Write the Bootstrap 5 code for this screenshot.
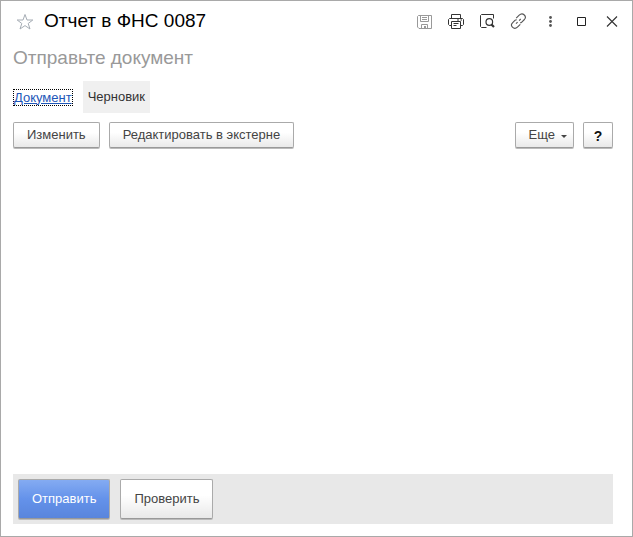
<!DOCTYPE html>
<html lang="ru">
<head>
<meta charset="utf-8">
<meta name="viewport" content="width=device-width, initial-scale=1">
<title>Отчет в ФНС 0087</title>
<link href="https://cdn.jsdelivr.net/npm/bootstrap@5.3.0/dist/css/bootstrap.min.css" rel="stylesheet">
<style>
body { font-family: "Liberation Sans", Arial, sans-serif; font-size: 13px; line-height: 16px; color: #333; background: #fff; }
.window-frame { border: 1px solid #a9a9a9; }
.window-head { height: 41px; padding: 0 4px 0 15px; }
.window-title { font-size: 19px; line-height: 24px; padding-bottom: 2px; color: #000; }
.subtitle { font-size: 19px; line-height: 24px; color: #999; }
.icon-btn { width: 31px; height: 31px; color: #333; }
.icon-btn svg, .star-btn svg { display: block; }
.icon-btn svg { margin: 0 7px; }
.star-btn { margin-right: 10px; }
.window-tools { margin-right: 1px; }
.window-body { padding: 4px 19px 12px 12px; }
.tabs { height: 32px; gap: 10px; margin-top: 11px; }
.doc-link { color: #1d56b8; line-height: 15px; border: 1px dotted #000; }
.tab-current { background: #f0f0f0; padding: 8px 5px; }
.commands { margin-top: 9px; gap: 9px; }
.btn-form { font-size: 13px; line-height: 16px; color: #444; padding: 4px 13px; border: 1px solid #aaa; border-bottom-color: #999; border-radius: 2px; background: linear-gradient(#fff 40%, #e9e9e9); box-shadow: 0 1px 0 #bbb; }
.btn-form:hover { color: #222; border-color: #999; }
.btn-more::after { content: ""; display: inline-block; margin-left: 6px; vertical-align: 1px; border: 3px solid transparent; border-top-color: #444; border-bottom: 0; }
.btn-more { padding-right: 6px; }
.btn-help { width: 30px; font-size: 14px; font-weight: 700; color: #111; padding: 5px 0 3px; }
.footer-bar { background: #e8e8e8; padding: 5px; gap: 10px; }
.footer-bar .btn-form { padding: 11px 13px; }
.footer-bar .btn-send { color: #fff; background: linear-gradient(#84abf2, #6492ea 50%, #5985dc); }
</style>
<script src="https://cdn.jsdelivr.net/npm/bootstrap@5.3.0/dist/js/bootstrap.bundle.min.js"></script>
</head>
<body>
<main class="window-frame d-flex flex-column min-vh-100">
  <header class="window-head d-flex align-items-center">
    <button type="button" class="star-btn btn p-0 border-0" aria-label="В избранное">
      <svg width="18" height="18" viewBox="0 0 18 18" fill="none" stroke="#a6adb5"><path d="M9 1.5 11 7H16.8L12.2 10.5 14 16 9 12.6 4 16 5.8 10.5 1.2 7H7Z"/></svg>
    </button>
    <h1 class="window-title fw-normal mb-0 me-auto">Отчет в ФНС 0087</h1>
    <div class="window-tools d-flex">
      <button type="button" class="icon-btn btn p-0 border-0" aria-label="Сохранить">
        <svg width="17" height="17" viewBox="0 0 17 17" fill="none" stroke="#999"><path d="M1.5 2.5H14.5V15.5H2L.5 14V3.5L1.5 2.5ZM3.5 2.5V8.5H11.5V2.5M5 4.5H10M5 6.5H10M4.5 15.5V11.5H10.5V15.5"/><path d="M7 13H9V15H7Z" fill="#999" stroke="none"/></svg>
      </button>
      <button type="button" class="icon-btn btn p-0 border-0" aria-label="Печать">
        <svg width="17" height="17" viewBox="0 0 17 17" fill="none" stroke="#333"><path d="M3.5 5V1.5H12.5V5M3.5 12.5H1.5L.5 11.5V6.5L1.5 5.5H14.5L15.5 6.5V11.5L14.5 12.5H12.5M3.5 8.5H12.5V15.5H3.5ZM5.5 10.5H10.5M5.5 12.5H8.5M9 7H11M12.5 7H14"/></svg>
      </button>
      <button type="button" class="icon-btn btn p-0 border-0" aria-label="Предварительный просмотр">
        <svg width="17" height="17" viewBox="0 0 17 17" fill="none" stroke="#333"><path d="M14.5 5.5V1.5H2.5L1.5 2.5V13.5L2.5 14.5H7.5"/><circle cx="10.3" cy="9" r="3.3" stroke-width="1.2"/><path d="M12.5 11.5 15 14" stroke-width="2.2"/></svg>
      </button>
      <button type="button" class="icon-btn btn p-0 border-0" aria-label="Получить ссылку">
        <svg width="17" height="17" viewBox="0 0 17 17" fill="none" stroke="#555" stroke-width="1.1"><path d="M6.2 5.2 9.2 2.2C10.6.8 12.8.5 14.3 2S15.7 5.1 14.4 6.5L11.8 9.1C11.3 9.6 10.7 9.8 10 9.8M10.3 11.4 7.4 14.2C6 15.5 3.8 15.6 2.4 14.2S1.2 11.2 2.5 9.8L4.9 7.4C5.4 6.9 6 6.7 6.7 6.7M6 10.7 7.6 9.1M9.1 7.6 10.7 6"/></svg>
      </button>
    </div>
    <div class="d-flex">
      <button type="button" class="icon-btn btn p-0 border-0" aria-label="Дополнительно">
        <svg width="17" height="17" viewBox="0 0 17 17" fill="#555"><circle cx="8.5" cy="4.5" r="1.4"/><circle cx="8.5" cy="8.5" r="1.4"/><circle cx="8.5" cy="12.5" r="1.4"/></svg>
      </button>
      <button type="button" class="icon-btn btn p-0 border-0" aria-label="Развернуть">
        <svg width="17" height="17" viewBox="0 0 17 17" fill="none" stroke="#222"><path d="M4.5 4.5H12.5V12.5H4.5Z"/></svg>
      </button>
      <button type="button" class="icon-btn btn p-0 border-0" aria-label="Закрыть">
        <svg width="17" height="17" viewBox="0 0 17 17" fill="none" stroke="#333" stroke-width="1.1"><path d="M3 3.5 13 13.5M13 3.5 3 13.5"/></svg>
      </button>
    </div>
  </header>
  <section class="window-body d-flex flex-column flex-grow-1">
    <h2 class="subtitle fw-normal mb-0">Отправьте документ</h2>
    <nav class="tabs d-flex align-items-center" aria-label="Разделы">
      <a class="doc-link" href="#document">Документ</a>
      <span class="tab-current" aria-current="page">Черновик</span>
    </nav>
    <div class="commands d-flex">
      <button type="button" class="btn btn-form">Изменить</button>
      <button type="button" class="btn btn-form">Редактировать в экстерне</button>
      <button type="button" class="btn btn-form btn-more ms-auto">Еще</button>
      <button type="button" class="btn btn-form btn-help" aria-label="Справка">?</button>
    </div>
    <footer class="footer-bar d-flex mt-auto">
      <button type="button" class="btn btn-form btn-send">Отправить</button>
      <button type="button" class="btn btn-form">Проверить</button>
    </footer>
  </section>
</main>
</body>
</html>
